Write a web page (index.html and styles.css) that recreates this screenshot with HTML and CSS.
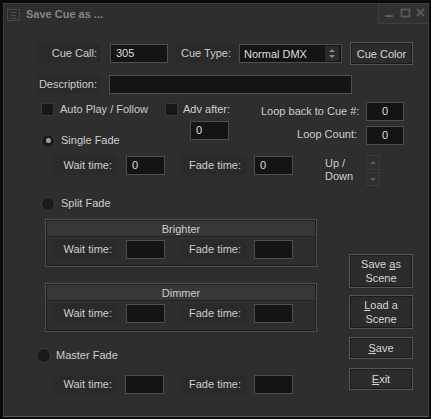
FILE: index.html
```html
<!DOCTYPE html>
<html>
<head>
<meta charset="utf-8">
<link rel="stylesheet" href="styles.css">
</head>
<body>
<div class="window">
  <div class="titlebar">
    <div class="ticon"><span></span><span></span><span></span></div>
    <div class="ttext">Save Cue as ...</div>
    <div class="tctrls">
      <svg width="50" height="19" viewBox="0 0 50 19">
        <rect x="6" y="11" width="8" height="2" fill="#5c5c5c"/>
        <rect x="22.5" y="5.5" width="8" height="7" fill="none" stroke="#5c5c5c" stroke-width="1.6"/>
        <path d="M38 5 L45 12 M45 5 L38 12" stroke="#5c5c5c" stroke-width="1.8"/>
      </svg>
    </div>
  </div>

  <div class="row r1">
    <div class="lbl w63 ml33 rt3">Cue Call:</div>
    <div class="inp w58 ml10 txt">305</div>
    <div class="lbl w61 ml8 rt7">Cue Type:</div>
    <div class="select">
      <span>Normal DMX</span>
      <div class="spin">
        <svg width="6" height="11" viewBox="0 0 6 11"><path d="M0 4 L3 1 L6 4 Z M0 7 L3 10 L6 7 Z" fill="#8a8a8a"/></svg>
      </div>
    </div>
    <div class="btn cuecolor"><span>Cue Color</span></div>
  </div>

  <div class="row r2">
    <div class="lbl w63 ml33 rt3">Description:</div>
    <div class="inp desc"></div>
  </div>

  <div class="row r3">
    <div class="chk ml37"></div>
    <div class="ctext w105">Auto Play / Follow</div>
    <div class="chk"></div>
    <div class="ctext w78 ml5">Adv after:</div>
    <div class="rlabel w96">Loop back to Cue #:</div>
    <div class="inp w38 ml9 ctr">0</div>
  </div>

  <div class="row r4">
    <div class="radgrp">
      <div class="radio on"></div>
      <div class="rtext">Single Fade</div>
    </div>
    <div class="inp w39 txt">0</div>
    <div class="rlabel w128 lc">Loop Count:</div>
    <div class="inp w38 ml9 mt5 ctr">0</div>
  </div>

  <div class="row r5">
    <div class="lbl w64 ml49 rt5 mt1">Wait time:</div>
    <div class="inp w39 ml9 mt1 txt">0</div>
    <div class="lbl w65 ml16 rt5 mt1">Fade time:</div>
    <div class="inp w39 ml8 mt1 txt">0</div>
    <div class="updown">Up /<br>Down</div>
    <div class="spinbtns">
      <div class="sb"><svg width="8" height="5" viewBox="0 0 8 5"><path d="M1 4 L4 1 L7 4 Z" fill="#5a5a5a"/></svg></div>
      <div class="sb dn"><svg width="8" height="5" viewBox="0 0 8 5"><path d="M1 1 L4 4 L7 1 Z" fill="#5a5a5a"/></svg></div>
    </div>
  </div>

  <div class="row rsplit">
    <div class="radgrp2">
      <div class="radio"></div>
      <div class="rtext">Split Fade</div>
    </div>
  </div>

  <div class="lower">
    <div class="leftcol">
      <div class="group g1">
        <div class="ghead">Brighter</div>
        <div class="grow">
          <div class="lbl w64 rt5">Wait time:</div>
          <div class="inp w39 ml9"></div>
          <div class="lbl w65 ml16 rt5">Fade time:</div>
          <div class="inp w39 ml8"></div>
        </div>
      </div>
      <div class="group g2">
        <div class="ghead">Dimmer</div>
        <div class="grow">
          <div class="lbl w64 rt5">Wait time:</div>
          <div class="inp w39 ml9"></div>
          <div class="lbl w65 ml16 rt5">Fade time:</div>
          <div class="inp w39 ml8"></div>
        </div>
      </div>
      <div class="mrow">
        <div class="radio big"></div>
        <div class="rtext ml5">Master Fade</div>
      </div>
      <div class="row mwait">
        <div class="lbl w64 ml49 rt5">Wait time:</div>
        <div class="inp w39 ml8"></div>
        <div class="lbl w65 ml17 rt5">Fade time:</div>
        <div class="inp w39 ml8"></div>
      </div>
    </div>
    <div class="rightcol">
      <div class="btn b2"><span>Save <u>a</u>s<br>Scene</span></div>
      <div class="btn b2 mt7"><span><u>L</u>oad a<br>Scene</span></div>
      <div class="btn b1 mt8"><span><u>S</u>ave</span></div>
      <div class="btn b1 mt9"><span><u>E</u>xit</span></div>
    </div>
  </div>
</div>
</body>
</html>
```

FILE: styles.css
```css
* { box-sizing: border-box; }
html, body { margin: 0; padding: 0; }
body {
  background: #0b0b0b;
  width: 431px;
  height: 419px;
  overflow: hidden;
  font-family: "Liberation Sans", Arial, sans-serif;
  font-size: 11px;
  color: #cdcdcd;
}
.window {
  margin: 3px 0 0 3px;
  width: 426px;
  height: 414px;
  background: #2e2e2e;
  border: 1px solid #3c3c3c;
  border-bottom-color: #5a5a5a;
}
.titlebar {
  display: flex;
  height: 20px;
  align-items: flex-start;
}
.ticon {
  margin: 5px 0 0 3px;
  width: 13px;
  height: 12px;
  border: 1px solid #454545;
  display: flex;
  flex-direction: column;
  align-items: center;
  justify-content: center;
  gap: 2px;
}
.ticon span { display: block; width: 5px; height: 1px; background: #4a4a4a; }
.ttext {
  margin-left: 6px;
  line-height: 21px;
  font-weight: bold;
  color: #858585;
}
.tctrls {
  margin-left: auto;
  width: 50px;
  height: 20px;
  background: #313131;
  border-left: 1px solid #3e3e3e;
  border-bottom: 1px solid #3e3e3e;
}
.tctrls svg { display: block; }

.row { display: flex; align-items: flex-start; }
.r1 { margin-top: 18px; height: 23px; }
.r2 { margin-top: 10px; height: 20px; }
.r3 { margin-top: 7px; height: 19px; }
.r4 { height: 25px; }
.r5 { margin-top: 9px; height: 32px; }
.rsplit { margin-top: 9px; height: 14px; }

.lbl {
  height: 19px;
  line-height: 19px;
  background: #2a2a2a;
  text-align: right;
  white-space: nowrap;
  margin-top: 2px;
}
.r2 .lbl { margin-top: 0; }
.inp {
  height: 19px;
  background: #141414;
  border: 1px solid #4e4e4e;
  line-height: 17px;
  color: #dedede;
  margin-top: 2px;
}
.r2 .inp, .r3 .inp, .r4 .inp, .grow .inp, .mwait .inp, .grow .lbl, .mwait .lbl { margin-top: 0; }
.txt { padding-left: 5px; }
.ctr { text-align: center; }

.w38 { width: 38px; } .w39 { width: 39px; } .w58 { width: 58px; }
.w61 { width: 61px; } .w63 { width: 63px; } .w64 { width: 64px; } .w65 { width: 65px; }
.w78 { width: 78px; } .w96 { width: 96px; } .w105 { width: 105px; } .w128 { width: 128px; }
.ml5 { margin-left: 5px; } .ml8 { margin-left: 8px; } .ml9 { margin-left: 9px; }
.ml10 { margin-left: 10px; } .ml16 { margin-left: 16px; } .ml17 { margin-left: 17px; }
.ml33 { margin-left: 33px; } .ml37 { margin-left: 37px; } .ml49 { margin-left: 49px; }
.r4 .mt5, .mt5 { margin-top: 5px; }
.r5 .mt1, .mt1 { margin-top: 1px; }
.mt7 { margin-top: 7px; } .mt8 { margin-top: 8px; } .mt9 { margin-top: 9px; }
.rt3 { padding-right: 3px; } .rt5 { padding-right: 5px; } .rt7 { padding-right: 6px; }

.select {
  margin: 2px 0 0 2px;
  width: 103px;
  height: 19px;
  background: #141414;
  border: 1px solid #4e4e4e;
  display: flex;
  align-items: center;
  padding-left: 4px;
  color: #dedede;
}
.select span { flex: 1; }
.spin {
  width: 14px;
  height: 15px;
  margin-right: 2px;
  background: #2a2a2a;
  display: flex;
  align-items: center;
  justify-content: center;
}
.spin svg { display: block; }

.btn {
  background: #2c2c2c;
  border: 1px solid #565656;
  box-shadow: inset 0 0 0 1px #1b1b1b;
  color: #d6d6d6;
  text-align: center;
  display: flex;
  align-items: center;
  justify-content: center;
  line-height: 14px;
}
.btn span { display: block; }
.btn u { text-underline-offset: 1px; }
.cuecolor { margin-left: 8px; width: 63px; height: 23px; }

.desc { margin-left: 9px; width: 243px; margin-top: 1px; }

.chk {
  width: 13px;
  height: 13px;
  margin-top: 1px;
  background: #171717;
  border: 1px solid #383838;
}
.ctext { margin-left: 6px; line-height: 15px; white-space: nowrap; }
.ctext.ml5 { margin-left: 5px; }
.rlabel { text-align: right; line-height: 19px; white-space: nowrap; }
.rlabel.lc { margin-top: 4px; }

.radgrp { margin: 12px 0 0 37px; width: 149px; display: flex; align-items: center; }
.radgrp2 { margin-left: 37px; display: flex; align-items: center; }
.radio {
  width: 14px;
  height: 14px;
  border-radius: 50%;
  background: #1b1b1b;
  border: 1px solid #3c3c3c;
  display: flex;
  align-items: center;
  justify-content: center;
}
.radio.big { width: 15px; height: 15px; }
.radio.on::after {
  content: "";
  width: 5px;
  height: 5px;
  border-radius: 50%;
  background: #a0a0a0;
}
.rtext { margin-left: 6px; line-height: 15px; white-space: nowrap; }
.rtext.ml5 { margin-left: 5px; }

.updown { margin: 2px 0 0 32px; width: 41px; line-height: 13px; }
.spinbtns { display: flex; flex-direction: column; gap: 2px; }
.sb {
  width: 14px;
  height: 15px;
  border: 1px solid #3a3a3a;
  background: #2f2f2f;
  display: flex;
  align-items: center;
  justify-content: center;
}
.sb.dn { height: 14px; }
.sb svg { display: block; }

.lower { display: flex; align-items: flex-start; }
.leftcol { width: 313px; }
.group {
  margin-left: 41px;
  width: 272px;
  border: 1px solid #4f4f4f;
  box-shadow: inset 0 0 0 1px #1e1e1e;
  background: #2e2e2e;
}
.g1 { margin-top: 9px; height: 48px; }
.g2 { margin-top: 16px; height: 49px; }
.ghead {
  line-height: 16px;
  text-align: center;
  background: #373737;
  border-bottom: 1px solid #222;
  margin: 1px 1px 0 1px;
  height: 16px;
}
.grow { display: flex; align-items: flex-start; margin: 3px 0 0 7px; }
.mrow { display: flex; align-items: center; margin: 16px 0 0 32px; }
.mwait { margin-top: 12px; }

.rightcol { margin-left: 32px; margin-top: 44px; width: 64px; }
.b2 { height: 34px; }
.b1 { height: 22px; }
```
